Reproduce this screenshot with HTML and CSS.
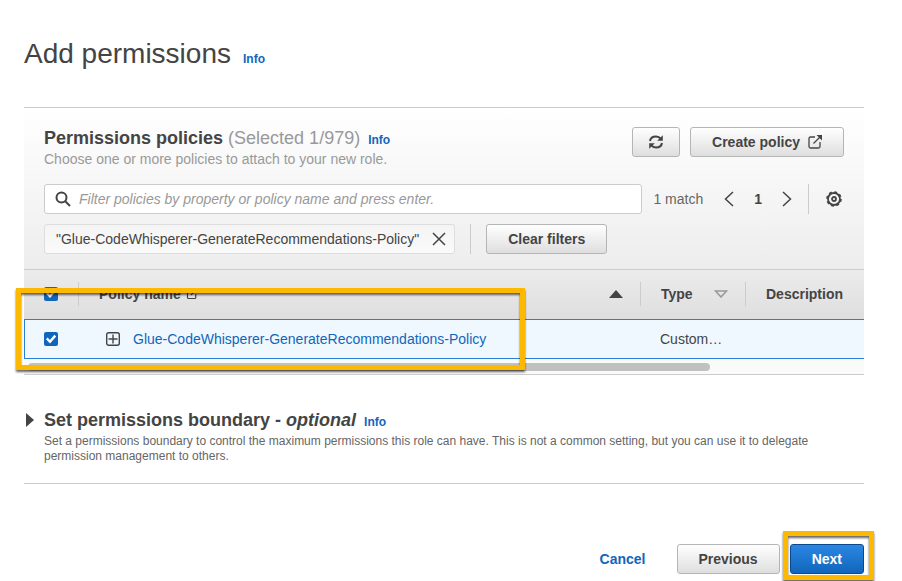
FILE: index.html
```html
<!DOCTYPE html>
<html lang="en">
<head>
<meta charset="utf-8">
<title>Add permissions</title>
<link rel="stylesheet" href="styles.css">
</head>
<body>
<main class="page">
  <header class="page-head">
    <h1>Add permissions</h1>
    <a class="info" href="#">Info</a>
  </header>

  <section class="card">
    <div class="card-head">
      <div class="title-row">
        <div class="title-text">
          <div class="heading">
            <h2>Permissions policies <span class="count">(Selected 1/979)</span></h2>
            <a class="info" href="#">Info</a>
          </div>
          <p class="subtitle">Choose one or more policies to attach to your new role.</p>
        </div>
        <button class="btn btn-icon" type="button" aria-label="Refresh">
          <svg width="16" height="16" viewBox="0 0 16 16" fill="none" stroke="currentColor" stroke-width="2"><path d="M2 7C2.500 4 5 2.500 8 2.500c2 0 3.700.8 5 2.300M14 9c-.5 3-3 4.500-6 4.500-2 0-3.700-.8-5-2.300"/><path d="M14.800 1.200v5.600H9.200zM1.200 14.800V9.200h5.600z" fill="currentColor" stroke="none"/></svg>
        </button>
        <button class="btn" type="button">Create policy
          <svg width="14" height="14" viewBox="1 1 14 14" fill="none" stroke="currentColor" stroke-width="1.300"><path d="M8 3H3.500C2.500 3 2 3.500 2 4.500v8c0 1 .5 1.500 1.500 1.500h8c1 0 1.500-.5 1.500-1.500V8M6.500 9.500L14 2"/><path d="M9.500 1H15v5.500z" fill="currentColor" stroke="none"/></svg>
        </button>
      </div>

      <div class="search-row">
        <label class="search">
          <svg width="16" height="16" viewBox="0 0 16 16" fill="none" stroke="currentColor" stroke-width="2"><circle cx="6.500" cy="6.500" r="5"/><path d="M10 10l5 5"/></svg>
          <input type="text" aria-label="Filter policies" placeholder="Filter policies by property or policy name and press enter.">
        </label>
        <span class="matches">1 match</span>
        <nav class="pager" aria-label="Pages">
          <button class="bare" type="button" aria-label="Previous page"><svg width="10" height="16" viewBox="0 0 10 16" fill="none" stroke="currentColor" stroke-width="1.500"><path d="M9 1L1.500 8 9 15"/></svg></button>
          <b>1</b>
          <button class="bare" type="button" aria-label="Next page"><svg width="10" height="16" viewBox="0 0 10 16" fill="none" stroke="currentColor" stroke-width="1.500"><path d="M1 1l7.500 7L1 15"/></svg></button>
        </nav>
        <button class="bare settings" type="button" aria-label="Settings">
          <svg width="16" height="16" viewBox="0 0 16 16" fill="none" stroke="currentColor" stroke-width="1.800" stroke-linejoin="round"><path d="M6.700 1h2.600l.7 1.300 1.500-.4 1.600 1.600-.4 1.500 1.400.7v2.600l-1.300.9.4 1.500-1.600 1.600-1.600-.4-.7 1.400H6.700L6 13.700l-1.500.4-1.600-1.600.4-1.500L2 10.300V7.700L1.900 5.700l1.400-.7-.4-1.500 1.600-1.600 1.500.4z" stroke="none"/><circle cx="8" cy="8" r="6"/><circle cx="8" cy="8" r="7" stroke-width="1.600" stroke-dasharray="3 2.500"/><circle cx="8" cy="8" r="2"/></svg>
        </button>
      </div>

      <div class="filter-row">
        <span class="token">"Glue-CodeWhisperer-GenerateRecommendations-Policy"
          <button class="bare" type="button" aria-label="Remove filter"><svg width="14" height="14" viewBox="0 0 14 14" fill="none" stroke="currentColor" stroke-width="1.500"><path d="M1 1l12 12M13 1L1 13"/></svg></button>
        </span>
        <span class="clear"><button class="btn" type="button">Clear filters</button></span>
      </div>
    </div>

    <div class="table-wrap">
      <table>
        <colgroup><col class="col-check"><col><col class="col-type"><col class="col-desc"></colgroup>
        <thead>
          <tr>
            <th><input type="checkbox" checked aria-label="Select all policies"></th>
            <th><div class="th-inner"><span class="label">Policy name
              <svg width="12" height="12" viewBox="0 0 16 16" fill="none" stroke="currentColor" stroke-width="1.600"><path d="M8 3H3.500C2.500 3 2 3.500 2 4.500v8c0 1 .5 1.500 1.500 1.500h8c1 0 1.500-.5 1.500-1.500V8M6.500 9.500L14 2"/><path d="M9.500 1H15v5.500z" fill="currentColor" stroke="none"/></svg></span>
              <svg width="14" height="8" viewBox="0 0 14 8"><path d="M7 0l7 8H0z" fill="currentColor"/></svg></div></th>
            <th><div class="th-inner">Type
              <svg class="unsorted" width="14" height="8" viewBox="0 0 14 8" fill="none" stroke="currentColor" stroke-width="1.600"><path d="M1.500 1h11L7 7z"/></svg></div></th>
            <th><div class="th-inner">Description</div></th>
          </tr>
        </thead>
        <tbody>
          <tr>
            <td><input type="checkbox" checked aria-label="Select policy"></td>
            <td><div class="policy">
              <button class="bare" type="button" aria-label="Expand policy"><svg width="14" height="14" viewBox="0 0 14 14" fill="none" stroke="currentColor" stroke-width="1.400"><rect x=".7" y=".7" width="12.600" height="12.600" rx="2"/><path d="M7 2.500v9M2.500 7h9"/></svg></button>
              <a href="#">Glue-CodeWhisperer-GenerateRecommendations-Policy</a></div></td>
            <td>Custom…</td>
            <td></td>
          </tr>
        </tbody>
      </table>
      <div class="scroll-track"><div class="scroll-thumb"></div></div>
      <div class="highlight highlight-row"></div>
    </div>
  </section>

  <section class="boundary">
    <svg class="caret" width="8" height="14" viewBox="0 0 8 14"><path d="M0 0l8 7-8 7z" fill="currentColor"/></svg>
    <div>
      <div class="heading">
        <h2>Set permissions boundary - <em>optional</em></h2>
        <a class="info" href="#">Info</a>
      </div>
      <p>Set a permissions boundary to control the maximum permissions this role can have. This is not a common setting, but you can use it to delegate permission management to others.</p>
    </div>
  </section>

  <footer class="actions">
    <a class="cancel" href="#">Cancel</a>
    <button class="btn" type="button">Previous</button>
    <span class="next"><button class="btn btn-primary" type="button">Next</button><span class="highlight highlight-next"></span></span>
  </footer>
</main>
</body>
</html>
```
FILE: styles.css
```css
* { box-sizing: border-box; }
body {
  margin: 0;
  background: #fff;
  color: #444;
  font: 14px/20px "Liberation Sans", Arial, sans-serif;
}
h1, h2, p { margin: 0; }
a { color: #1166bb; text-decoration: none; }
svg { display: block; flex: none; }

.page { padding: 36px 38px 7px 24px; }
.page-head, .heading { display: flex; align-items: baseline; gap: 12px; }
.page-head { margin-bottom: 35px; }
.heading { gap: 8px; }
h1 { font-size: 28px; line-height: 36px; font-weight: 400; }
h2 { font-size: 18px; line-height: 22px; font-weight: 700; }
.info { font-size: 12px; line-height: 16px; font-weight: 700; }
.count { color: #999; font-weight: 400; }

.btn {
  display: inline-flex;
  align-items: center;
  gap: 8px;
  height: 30px;
  padding: 0 21px;
  border: 1px solid #b5b5b5;
  border-radius: 3px;
  background: linear-gradient(#fff, #dedede);
  color: #444;
  font: 700 14px/20px "Liberation Sans", Arial, sans-serif;
}
.btn-icon { width: 48px; padding: 0; justify-content: center; }
.btn-primary {
  border-color: #0a4a8c;
  background: linear-gradient(#2b87e3, #1166bb);
  color: #fff;
}
.bare { display: flex; padding: 0; border: 0; background: none; color: #444; }

.card { border-top: 1px solid #ccc; border-bottom: 1px solid #ccc; }
.card-head { padding: 19px 20px 15px; background: linear-gradient(#fff, #ededed); }
.title-row { display: flex; align-items: flex-start; gap: 10px; }
.title-text { flex: 1; }
.subtitle { color: #999; }

.search-row { display: flex; align-items: center; margin-top: 15px; }
.search {
  flex: 1;
  display: flex;
  align-items: center;
  gap: 8px;
  height: 30px;
  padding: 0 10px;
  border: 1px solid #ccc;
  border-radius: 3px;
  background: #fff;
}
.search input {
  flex: 1;
  min-width: 0;
  padding: 0;
  border: 0;
  outline: 0;
  background: none;
  font: italic 14px/20px "Liberation Sans", Arial, sans-serif;
}
.search input::placeholder { color: #999; opacity: 1; }
.matches { margin-left: 11px; color: #666; }
.pager { display: flex; align-items: center; gap: 20px; margin: 0 16px 0 21px; }
.settings {
  align-items: center;
  height: 30px;
  padding: 0 2px 0 17px;
  border-left: 1px solid #ccc;
}

.filter-row { display: flex; gap: 15px; margin-top: 10px; }
.token {
  display: flex;
  align-items: center;
  gap: 13px;
  height: 30px;
  padding: 0 8px 0 11px;
  border: 1px solid #ddd;
  border-radius: 3px;
  background: linear-gradient(#f4f4f4, #fafafa);
}
.clear { display: flex; padding-left: 15px; border-left: 1px solid #ccc; }

.table-wrap { position: relative; background: #fafafa; }
table { width: 100%; table-layout: fixed; border-collapse: separate; border-spacing: 0; }
.col-check { width: 54px; }
.col-type { width: 105px; }
.col-desc { width: 119px; }
thead { background: linear-gradient(#ececec, #dedede); }
th, td { padding: 0; text-align: left; }
th { height: 50px; padding-bottom: 2px; border-top: 1px solid #ccc; }
td { height: 40px; border: solid #2b7fd8; border-width: 1px 0; background: #f0f8ff; }
td:first-child { border-left-width: 1px; }
th:first-child { padding-left: 20px; }
td:first-child { padding-left: 19px; }
td:nth-child(3) { padding-left: 20px; }
.th-inner {
  display: flex;
  align-items: center;
  justify-content: space-between;
  height: 24px;
  padding: 0 17px 0 20px;
  border-left: 1px solid #ccc;
}
.label { display: flex; align-items: center; gap: 5px; }
.unsorted { color: #999; }
.policy { display: flex; align-items: center; gap: 13px; padding-left: 28px; }

input[type="checkbox"] {
  appearance: none;
  display: block;
  width: 14px;
  height: 14px;
  margin: 0;
  border-radius: 2px;
  background: #1166bb;
}
input[type="checkbox"]::before {
  content: "";
  display: block;
  height: 14px;
  background: #fff;
  clip-path: polygon(14% 52%, 26% 40%, 42% 57%, 74% 20%, 87% 32%, 43% 82%);
}

.scroll-track { height: 15px; padding: 4px; }
.scroll-thumb { width: 82%; height: 8px; border-radius: 4px; background: #c1c1c1; }

.highlight {
  position: absolute;
  border: 5px solid #fdb900;
  filter: drop-shadow(0 2px 1px rgba(0, 0, 0, 0.6));
  pointer-events: none;
}
.highlight-row { top: 19px; bottom: 4px; left: -8px; width: 509px; }

.boundary {
  display: flex;
  gap: 10px;
  margin-top: 34px;
  padding: 0 20px 19px 2px;
  border-bottom: 1px solid #ccc;
}
.boundary p { margin-top: 3px; color: #666; font-size: 12px; line-height: 15px; }
.caret { margin-top: 4px; }

.actions { display: flex; align-items: center; justify-content: flex-end; gap: 10px; margin-top: 60px; }
.cancel { margin-right: 21px; font-weight: 700; }
.next { position: relative; display: flex; }
.highlight-next { top: -13px; right: -10px; bottom: -6px; left: -7px; }
```
